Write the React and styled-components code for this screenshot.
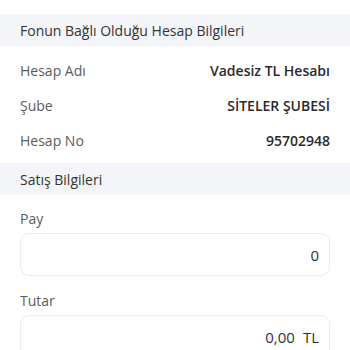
import styled, {createGlobalStyle} from 'styled-components'

const GlobalStyle = createGlobalStyle`
  html, body {
    margin: 0;
    padding: 0;
    background: #ffffff;
  }
  body {
    font-family: 'Open Sans', 'Noto Sans', sans-serif;
    color: #333;
  }
`

const Page = styled.div`
  width: 350px;
  padding-top: 14px;
`

const SectionTitle = styled.div`
  height: 32px;
  display: flex;
  align-items: center;
  padding: 0 20px;
  background: #f4f5f8;
  font-size: 14px;
  color: #333;
`

const InfoList = styled.dl`
  margin: 0;
  padding: 7px 0 5px;
`

const InfoRow = styled.div`
  height: 35px;
  display: flex;
  align-items: center;
  justify-content: space-between;
  padding: 0 20px;
`

const Dt = styled.dt`
  font-size: 14px;
  color: #5c5c5c;
`

const Dd = styled.dd`
  margin: 0;
  font-size: 14px;
  font-weight: 600;
  color: #2a2a2a;
`

const Form = styled.div`
  padding: 14px 20px 0;
  display: flex;
  flex-direction: column;
`

const FieldLabel = styled.label`
  font-size: 14px;
  line-height: 20px;
  color: #5c5c5c;
  margin-bottom: 4px;
`

const Field = styled.div`
  height: 43px;
  box-sizing: border-box;
  border: 1px solid #ececec;
  border-radius: 9px;
  display: flex;
  align-items: center;
  justify-content: flex-end;
  padding: 0 10px;
  font-size: 15px;
  color: #333;
  margin-bottom: ${p => p.$gap || 0}px;
`

const Unit = styled.span`
  margin-left: 8px;
`

const rows = [
  ['Hesap Adı', 'Vadesiz TL Hesabı'],
  ['Şube', 'SİTELER ŞUBESİ'],
  ['Hesap No', '95702948']
]

export default function App() {
  return (
    <Page>
      <GlobalStyle />
      <SectionTitle>Fonun Bağlı Olduğu Hesap Bilgileri</SectionTitle>
      <InfoList>
        {rows.map(([k, v]) => (
          <InfoRow key={k}>
            <Dt>{k}</Dt>
            <Dd>{v}</Dd>
          </InfoRow>
        ))}
      </InfoList>
      <SectionTitle>Satış Bilgileri</SectionTitle>
      <Form>
        <FieldLabel>Pay</FieldLabel>
        <Field $gap={15}>0</Field>
        <FieldLabel>Tutar</FieldLabel>
        <Field>
          0,00<Unit>TL</Unit>
        </Field>
      </Form>
    </Page>
  )
}
